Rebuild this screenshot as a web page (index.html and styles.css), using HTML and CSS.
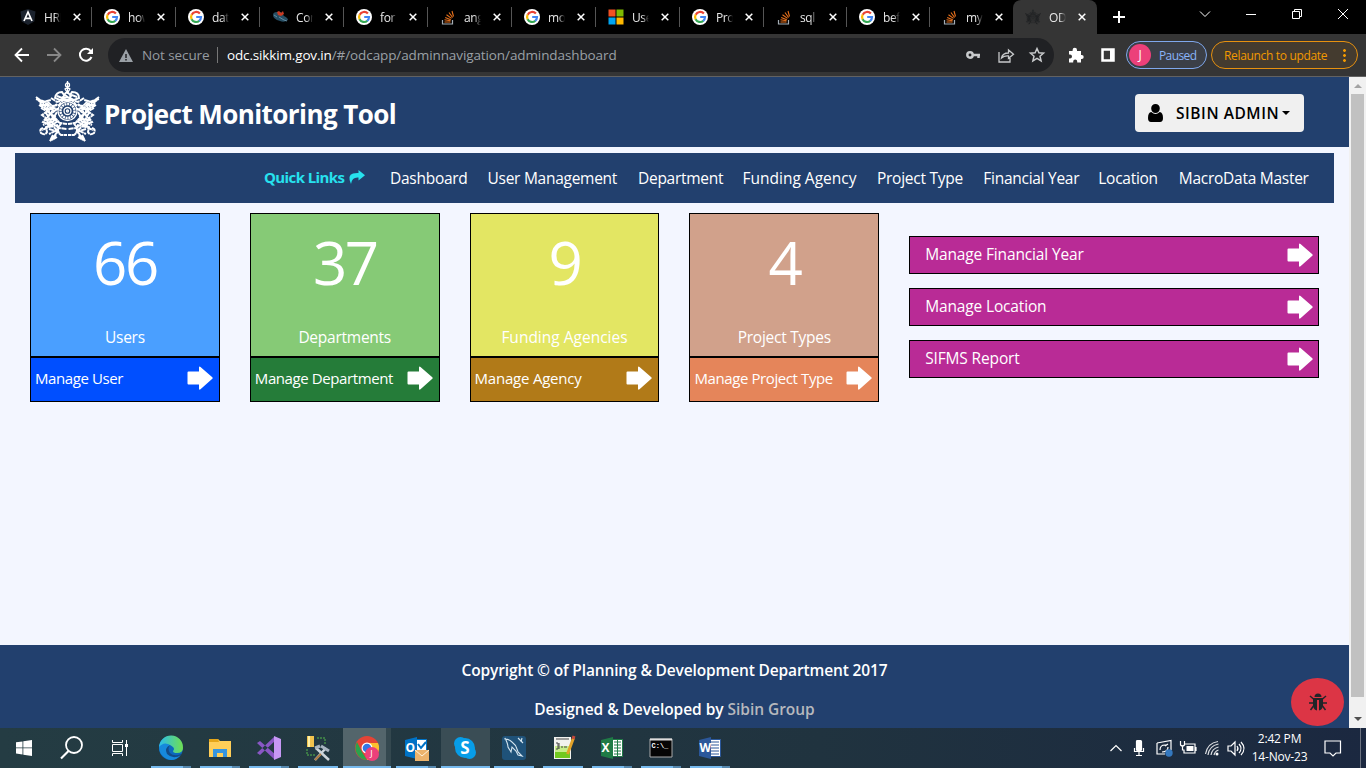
FILE: index.html
```html
<!DOCTYPE html>
<html lang="en">
<head>
<meta charset="utf-8">
<title>Project Monitoring Tool</title>
<link rel="stylesheet" href="styles.css">
</head>
<body>
<svg class="sprite" width="0" height="0">
  <symbol id="google" viewBox="0 0 16 16"><circle cx="8" cy="8" r="8" fill="#fff"/><g fill="none" stroke-width="2.2"><path d="M11.9 4.6A5 5 0 0 0 3.7 5.7" stroke="#ea4335"/><path d="M3.7 5.6a5 5 0 0 0 0 4.8" stroke="#fbbc05"/><path d="M3.6 10.2a5 5 0 0 0 7.8 1.5" stroke="#34a853"/><path d="M8.2 8H13a5 5 0 0 1-1.8 3.8" stroke="#4285f4"/></g></symbol>
  <symbol id="stack" viewBox="0 0 16 16"><path d="M2.500 11v4h10v-4" fill="none" stroke="#a4adb5" stroke-width="1.200"/><path d="M4.500 13h6M4.500 10.800l6 .9M5.200 8.400l5.600 2.300M6.500 5.800l5 3.600M9 3.500l3.600 5M12 2l1.500 5.500" stroke="#e8711c" stroke-width="1.100"/></symbol>
  <symbol id="angular" viewBox="0 0 16 16"><path d="M8 0l7.500 2.6-1.2 10L8 16l-6.300-3.400L.5 2.600z" fill="#1b222d"/><path d="M4 12L8 3l4 9M5.500 9.300h5" fill="none" stroke="#fff" stroke-width="1.700"/></symbol>
  <symbol id="cloud" viewBox="0 0 16 16"><path d="M1 6q0-3 4-3 3-1 5 1 1 2 2 3 4 2 4 4-4 3-8 1Q1 10 1 6z" fill="#264e63"/><path d="M5 3l2-1 2 2 2-2 1 3-3 2-3-1z" fill="#c83a22"/><path d="M7 8l5 3 3 1M2 6l3 2" stroke="#638ba3" fill="none"/></symbol>
  <symbol id="ms" viewBox="0 0 16 16"><path d="M.500.500h7v7h-7z" fill="#f25022"/><path d="M8.500.500h7v7h-7z" fill="#7fba00"/><path d="M.500 8.500h7v7h-7z" fill="#00a4ef"/><path d="M8.500 8.500h7v7h-7z" fill="#ffb900"/></symbol>
  <symbol id="x" viewBox="0 0 8 8"><path d="M.7.7l6.600 6.600M7.300.7L.7 7.300" fill="none" stroke="#fff" stroke-width="1.500"/></symbol>
  <symbol id="emblem" viewBox="0 0 65 62">
    <g fill="none" stroke="currentColor" stroke-width="1.300">
      <circle cx="32.500" cy="4" r="2"/><path d="M32.500 0v12M30 8q2.500-2 5 0l-2.500 4z"/>
      <path d="M20 17q1-6 7-6l2 3q3-5 6 0l2-3q7 0 7 6l-5 2H25zM22 15l5 2 3-3 4 3 3-3 5 2M25 19q7-5 14 0" stroke-width="1.900"/>
      <circle cx="32.500" cy="30" r="9.500"/><circle cx="32.500" cy="30" r="7" stroke-width="2.400" stroke-dasharray="2 .7"/><circle cx="32.500" cy="30" r="3.500"/><circle cx="32.500" cy="30" r="1"/>
    </g>
    <g id="beast" fill="none" stroke="currentColor" stroke-width="2" stroke-dasharray="5 .5">
      <path d="M1 16l15 11M3 19l12 10M5 22l10 10M1 18l10 3 8 10M4 24l10 6M6 27l9 5"/>
      <path d="M16 17l6 4 6-2-4 5-7 1-5-5 4-1M22 23l-8 6-7 5 4 3-3 4 7 3M24 27l-9 6-4 6 9-1-6 8-7 3M22 31l-3 5 4 4-9 6 9-2M11 32l5 8-5 8M8 47q-4 1-2 5 4 3 6-1l-1-5 5-2 6 5-8 4M18 38l7 4 7 1M17 42l7 5 8 1M14 48l7 2 5 4 6 0M22 51l-5 8 5-3M18 54l-3 6 6-6M26 43q-5 4-2 9M16 26l6 2-7 5 6 3M9 38l5 3-6 3M19 25l-3 8 4 5M13 30l5 6-4 7"/>
    </g>
    <use href="#beast" transform="translate(65 0) scale(-1 1)"/>
  </symbol>
  <symbol id="arrow" viewBox="0 0 26 24"><path d="M1.500 5.500H12V1.300q.3-1.300 1.500-.3l11.800 10.200q.8.8 0 1.600L13.500 23.300q-1.200.9-1.500-.3v-4.500H1.500q-1 0-1-1v-11q0-1 1-1z" fill="#fff"/></symbol>
  <symbol id="office" viewBox="0 0 24 24"><path d="M10 3.500h12.500v17H10z" fill="#fff" stroke="currentColor"/><path d="M1 4l12-3v22L1 20z" fill="currentColor"/></symbol>
</svg>

<div class="screen">
  <div class="tabs">
    <div class="tab"><svg class="fav"><use href="#angular"/></svg><span class="title">HRI</span><svg class="close"><use href="#x"/></svg></div>
    <div class="tab"><svg class="fav"><use href="#google"/></svg><span class="title">how</span><svg class="close"><use href="#x"/></svg></div>
    <div class="tab"><svg class="fav"><use href="#google"/></svg><span class="title">dat</span><svg class="close"><use href="#x"/></svg></div>
    <div class="tab"><svg class="fav"><use href="#cloud"/></svg><span class="title">Cor</span><svg class="close"><use href="#x"/></svg></div>
    <div class="tab"><svg class="fav"><use href="#google"/></svg><span class="title">for</span><svg class="close"><use href="#x"/></svg></div>
    <div class="tab"><svg class="fav"><use href="#stack"/></svg><span class="title">ang</span><svg class="close"><use href="#x"/></svg></div>
    <div class="tab"><svg class="fav"><use href="#google"/></svg><span class="title">mo</span><svg class="close"><use href="#x"/></svg></div>
    <div class="tab"><svg class="fav"><use href="#ms"/></svg><span class="title">Use</span><svg class="close"><use href="#x"/></svg></div>
    <div class="tab"><svg class="fav"><use href="#google"/></svg><span class="title">Pro</span><svg class="close"><use href="#x"/></svg></div>
    <div class="tab slim"><svg class="fav"><use href="#stack"/></svg><span class="title">sql</span><svg class="close"><use href="#x"/></svg></div>
    <div class="tab slim"><svg class="fav"><use href="#google"/></svg><span class="title">bef</span><svg class="close"><use href="#x"/></svg></div>
    <div class="tab slim last"><svg class="fav"><use href="#stack"/></svg><span class="title">my</span><svg class="close"><use href="#x"/></svg></div>
    <div class="tab active"><svg class="fav dark"><use href="#emblem"/></svg><span class="title">OD</span><svg class="close"><use href="#x"/></svg></div>
    <svg class="plus" viewBox="0 0 12 12"><path d="M6 0v12M0 6h12" stroke="#fff" stroke-width="2"/></svg>
    <svg class="winctl" viewBox="0 0 148 14" fill="none" stroke="#fff"><path d="M1 4.500l5 5 5-5M47 7.500h10M93.500 4.500h7v7h-7zM95.500 4.500v-2h7v7h-2M139 2l10 10M149 2l-10 10"/></svg>
  </div>

  <div class="toolbar">
    <svg class="navicons" viewBox="0 0 80 16" fill="none" stroke-width="1.800"><path d="M15 8H2M8 1.500L1.500 8 8 14.500" stroke="#fff"/><path d="M33 8h13M40 1.500L46.500 8 40 14.500" stroke="#888"/><path d="M76.800 4.200A6 6 0 1 0 77.500 10" stroke="#fff" stroke-width="2"/><path d="M79 1v6h-6z" fill="#fff"/></svg>
    <div class="omnibox">
      <svg class="warn" viewBox="0 0 14 13"><path d="M7 0l7 13H0z" fill="#9aa0a6"/><path d="M7 5v4M7 10v1.500" stroke="#202124" stroke-width="1.500"/></svg>
      <span class="insecure">Not secure</span><i class="bar"></i>
      <span class="url"><b>odc.sikkim.gov.in</b><span class="path">/#/odcapp/adminnavigation/admindashboard</span></span>
      <svg class="omniicons" viewBox="0 0 78 16"><g fill="none" stroke="#c7c9cb" stroke-width="1.300"><circle cx="4" cy="8" r="2.700" stroke-width="2.500"/><path d="M7 8h7M12.500 8v3" stroke-width="2.500"/><path d="M33 5v10h11v-4M35.500 11q1-5 7-5V3l5 4.300-5 4V9q-4-.5-7 2z"/><path d="M71 1.500l1.900 4.300 4.600.4-3.500 3 1.100 4.600-4.100-2.500-4.100 2.500L68 9.200l-3.500-3 4.600-.4z" stroke-width="1.500"/></g></svg>
    </div>
    <svg class="exticons" viewBox="0 0 48 16"><path d="M1 4h3.600V3a2.200 2.200 0 0 1 4.400 0v1h4v4h.7a2 2 0 0 1 0 4H13v3.500H9.200v-1a2 2 0 0 0-4 0v1H1v-4h1a2 2 0 0 0 0-4H1z" fill="#fff"/><path d="M34.500 2.500h11v11h-11z" fill="none" stroke="#fff" stroke-width="2.500"/><path d="M42 2v12h4V2z" fill="#fff"/></svg>
    <div class="profile"><span class="avatar">J</span><span class="paused">Paused</span></div>
    <div class="relaunch"><span>Relaunch to update</span><i></i></div>
  </div>

  <div class="view">
    <div class="page">
      <header class="head">
        <svg class="crest"><use href="#emblem"/></svg>
        <h1>Project Monitoring Tool</h1>
        <button class="user"><svg viewBox="0 0 15 18"><path d="M7.500 0a4.300 4.300 0 0 1 4.300 4.600Q11.500 9 7.500 9T3.200 4.600A4.300 4.300 0 0 1 7.500 0zM3.300 8q4.200 4 8.400 0Q15 8.500 15 14q0 4-3 4H3q-3 0-3-4 0-5.500 3.300-6z"/></svg><span>SIBIN ADMIN</span><i></i></button>
      </header>
      <nav class="links">
        <strong>Quick Links</strong>
        <svg class="share" viewBox="0 0 16 14"><path d="M9.500 0L16 5.300 9.500 10.500V7.600Q3 7 2 14-2 5 4 3.400q2-.6 5.500-.5z" fill="#27e2ee"/></svg>
        <a class="w1">Dashboard</a><a class="w2">User Management</a><a class="w3">Department</a><a class="w4">Funding Agency</a><a class="w5">Project Type</a><a class="w6">Financial Year</a><a class="w7">Location</a><a class="w8">MacroData Master</a>
      </nav>
      <main class="board">
        <section class="card blue"><div class="top"><b>66</b><span>Users</span></div><div class="foot"><span>Manage User</span><svg><use href="#arrow"/></svg></div></section>
        <section class="card green"><div class="top"><b>37</b><span>Departments</span></div><div class="foot"><span>Manage Department</span><svg><use href="#arrow"/></svg></div></section>
        <section class="card yellow"><div class="top"><b>9</b><span>Funding Agencies</span></div><div class="foot"><span>Manage Agency</span><svg><use href="#arrow"/></svg></div></section>
        <section class="card salmon"><div class="top"><b>4</b><span>Project Types</span></div><div class="foot"><span>Manage Project Type</span><svg><use href="#arrow"/></svg></div></section>
        <section class="actions"><div><span>Manage Financial Year</span><svg><use href="#arrow"/></svg></div><div><span>Manage Location</span><svg><use href="#arrow"/></svg></div><div><span>SIFMS Report</span><svg><use href="#arrow"/></svg></div></section>
      </main>
      <footer class="footer">
        <p class="copy">Copyright © of Planning &amp; Development Department 2017</p>
        <p class="dev">Designed &amp; Developed by <span>Sibin Group</span></p>
      </footer>
      <div class="bug"><svg viewBox="0 0 18 18"><path d="M5.500 4a3.500 3.500 0 0 1 7 0zM4 5h10v8q-1 4-4 4.500V7H8v10.500Q5 17 4 13z" fill="#212529"/><path d="M1 3l3.500 3M17 3l-3.500 3M0 10h5M18 10h-5M1.500 17l3-4M16.500 17l-3-4" stroke="#212529" stroke-width="1.500"/></svg></div>
    </div>
    <div class="scroll"><i class="up"></i><b></b><i class="down"></i></div>
  </div>

  <div class="taskbar">
    <div class="sys"><svg width="16" height="16" viewBox="0 0 16 16"><path d="M0 2.300L6.500 1.400v6.100H0zM7.300 1.300L16 0v7.500H7.300zM0 8.300h6.500v6.200L0 13.600zM7.300 8.300H16V16l-8.700-1.300z" fill="#fff"/></svg></div>
    <div class="sys"><svg width="24" height="24" viewBox="0 0 24 24"><circle cx="14" cy="9" r="8" fill="none" stroke="#fff" stroke-width="1.800"/><path d="M8.500 15L1 22.500" stroke="#fff" stroke-width="2.200"/></svg></div>
    <div class="sys"><svg width="16" height="16" viewBox="0 0 16 16" fill="none" stroke="#fff"><path d="M.5 0v2.500h10V0M.5 16v-2.500h10V16M.5 4.500h10v7H.5zM14.500 0v16"/><path d="M13 4h3v3h-3z" fill="#fff" stroke="none"/></svg></div>
    <div class="apps">
      <div class="app two"><svg viewBox="0 0 24 24"><defs><linearGradient id="eg"><stop stop-color="#2abced"/><stop offset="1" stop-color="#70df50"/></linearGradient></defs><circle cx="12" cy="12" r="12" fill="#0c69bd"/><path d="M0 11A12 12 0 0 1 24 12q0 5-6 5-4 0-4-2 2-2 0-4Q10 6 0 11z" fill="url(#eg)"/><path d="M0 11q5-6 11-2-4 3-2 8 4 5 12 3-6 6-13 3-8-4-8-12z" fill="#1689dc"/><path d="M11 9q-3 4 0 8 4 4 11 1 1 0 0 1Q14 24 8 18q-3-6 3-9z" fill="#124b88"/></svg></div>
      <div class="app two"><svg viewBox="0 0 24 24"><path d="M1 3h9l2 2h11v16H1z" fill="#ffce58"/><path d="M1 3h9l1 3H1z" fill="#e5a619"/><path d="M5 21v-8h14v8h-4v-4H9v4z" fill="#3695df"/></svg></div>
      <div class="app two"><svg viewBox="0 0 24 24"><path d="M0 7l3-2 16 14-2 4zM0 17l3 2L19 4l-2-3z" fill="#8957c5"/><path d="M17 0l7 3v18l-7 3z" fill="#c798f5"/></svg></div>
      <div class="app"><svg viewBox="0 0 24 24"><path d="M1 0h7v11H1z" fill="#f2c34e"/><path d="M2 0h2v11H2z" fill="#fff1a8"/><path d="M11 2h8v7M1 13v6h8" fill="none" stroke="#55b94b" stroke-dasharray="2 1"/><path d="M10 12l13 12M20 12L9 24" stroke="#cdd6dc" stroke-width="2.500"/><path d="M15 10l8 5M9 12l5-2" stroke="#a8b4c0" stroke-width="3"/><path d="M9 24l6-6" stroke="#a9773e" stroke-width="2"/></svg></div>
      <div class="app current"><svg viewBox="0 0 24 24"><circle cx="12" cy="12" r="12" fill="#e44436"/><path d="M2 6l5 10 5 8A12 12 0 0 1 2 6z" fill="#2ba24c"/><path d="M12 7h11a12 12 0 0 1-11 17l5-9z" fill="#fbc02d"/><circle cx="12" cy="12" r="5.500" fill="#fff"/><circle cx="12" cy="12" r="4.300" fill="#3477e5"/></svg><em>J</em></div>
      <div class="app two"><svg viewBox="0 0 24 24" color="#0072c6"><use href="#office"/><path d="M14 8l3 4 5-6" fill="none" stroke="#0072c6" stroke-width="2"/><path d="M11 14h14v11H11z" fill="#ecb36c"/><path d="M11 14l7 6 7-6" fill="none" stroke="#fff3dc"/></svg><span class="letter">O</span></div>
      <div class="app wide"><svg viewBox="0 0 24 24"><circle cx="12" cy="12" r="10" fill="#079de8"/><circle cx="7.500" cy="7.500" r="6.500" fill="#079de8"/><circle cx="16.500" cy="16.500" r="6.500" fill="#079de8"/></svg><span class="letter mid">S</span></div>
      <div class="app"><svg viewBox="0 0 24 24"><rect width="24" height="24" rx="3" fill="#1f5279"/><path d="M3 3q4 0 7 3 4 3 5 7l1 3 4 4-4-1-2-4-4-4-1 5-3-5q0-3-3-9zM16 2l5 5M20 2l-1 4" fill="none" stroke="#d4e5ef" stroke-width="1.100"/></svg></div>
      <div class="app"><svg viewBox="0 0 24 24"><path d="M3 1h17v22H3z" fill="#f2f2ee"/><path d="M4 13h15v9H4z" fill="#72c91f"/><path d="M4 10h15v6H4z" fill="#c7ee8a"/><path d="M5 7h2v6H5M8 7v6M10 11h2m1 0h3M5 3h13" fill="none" stroke="#444"/><path d="M22.500 2l-6 16" stroke="#e3a329" stroke-width="3"/><path d="M23 0l-1 3" stroke="#c34a3b" stroke-width="3"/></svg></div>
      <div class="app two"><svg viewBox="0 0 24 24" color="#1f7b46"><use href="#office"/><path d="M14 6h7M14 9h7M14 12h7M14 15h7M14 18h7M17.500 4v16" stroke="#1f7b46"/></svg><span class="letter">X</span></div>
      <div class="app two"><svg viewBox="0 0 24 24"><path d="M1 3h22v18H1z" fill="#050505" stroke="#aaa"/><path d="M1 3.500h22" stroke="#ddd" stroke-width="2"/></svg><span class="cmd">C:\_</span></div>
      <div class="app two"><svg viewBox="0 0 24 24" color="#2b579a"><use href="#office"/><path d="M13 6h8M13 9h8M13 12h8M13 15h8M13 18h8" stroke="#2b579a"/></svg><span class="letter">W</span></div>
    </div>
    <svg class="tray" viewBox="0 0 136 20" fill="none" stroke="#fff" stroke-width="1.200"><path d="M.5 13L6 7.500 11.500 13"/><rect x="26.500" y="2.500" width="5" height="10" rx="1" fill="#fff"/><path d="M24.500 10v3.500h9V10M29 13v4M26 17.500h6"/><path d="M47 5l14-2.500V12M47 5v11h8M50 12q0-5 5-5h2M55 8l3-2M58 9q0 5-6 5"/><circle cx="59" cy="15" r="3.700" fill="#3478bf" stroke="none"/><path d="M75 6h10v9H74v-3M86 9v4M70.500 3v4q2 2 4 0V3M72.500 8v4h2"/><path d="M76.500 8h7v5h-7z" fill="#fff" stroke="none"/><path d="M98 17q1-9 10.500-11M101 17q1-6.500 7.500-8M104 17q1-4 4.500-5M95.500 16Q97.500 5 108 3.500" opacity=".85"/><circle cx="107" cy="16" r="1.500" fill="#fff" stroke="none"/><path d="M118 8h3l4-4v13l-4-4h-3zM127 8q2 2.500 0 5M129 6q4 4.500 0 9M131 4q6 6.500 0 13"/></svg>
    <div class="clock"><span>2:42 PM</span><span>14-Nov-23</span></div>
    <svg class="notice" viewBox="0 0 18 18"><path d="M1 2h15.500v12H12l-3 3-3-3H1z" fill="none" stroke="#fff" stroke-width="1.200"/></svg>
    <i class="peek"></i>
  </div>
</div>
</body>
</html>
```
FILE: styles.css
```css
* { box-sizing: border-box; }
body { margin: 0; overflow: hidden; font-family: "Segoe UI", "Open Sans", "Noto Sans", sans-serif; }
.sprite { position: absolute; }
svg { display: block; flex: none; overflow: visible; }
span, a, strong, h1 { white-space: nowrap; }
.screen { width: 1366px; height: 768px; display: flex; flex-direction: column; }

.tabs { height: 34px; background: #000; display: flex; align-items: center; padding-left: 8px; flex: none; }
.tab { width: 84px; height: 34px; flex: none; display: flex; align-items: center; padding-left: 12px; background: linear-gradient(#555, #555) right 7px / 1px 20px no-repeat; }
.tab.slim { width: 83px; }
.tab.last { background: none; }
.tab.active { background: #353535; border-radius: 8px 8px 0 0; }
.fav { width: 16px; height: 16px; }
.dark { color: #1e2122; }
.title { color: #e8e8e8; font-size: 12px; letter-spacing: -.4px; width: 17px; margin: 0 12px 0 8px; mask-image: linear-gradient(90deg, #000 60%, transparent); }
.close { width: 8px; height: 8px; }
.plus { width: 12px; height: 12px; margin-left: 16px; }
.winctl { width: 148px; height: 14px; margin: -6px 19px 0 auto; }

.toolbar { height: 43px; flex: none; background: #353535; border-bottom: 1px solid #626262; display: flex; align-items: center; padding-left: 14px; }
.navicons { width: 80px; height: 16px; margin-right: 14px; }
.omnibox { width: 946px; height: 34px; border-radius: 17px; background: #202124; display: flex; align-items: center; padding: 0 11px; }
.warn { width: 14px; height: 13px; }
.insecure { margin-left: 9px; color: #969ba0; font-size: 13.500px; width: 67px; letter-spacing: -.1px; }
.bar { width: 1px; height: 16px; background: #777; margin: 0 9px 0 8px; }
.url { font-size: 13.500px; color: #9aa0a6; letter-spacing: -.1px; }
.url b { color: #fff; font-weight: 400; letter-spacing: -.15px; }
.omniicons { width: 78px; height: 16px; margin-left: auto; margin-right: -1px; }
.exticons { width: 48px; height: 16px; margin-left: 14px; }
.profile { width: 81px; height: 28px; margin-left: 10px; border: 1px solid #7fa8ed; border-radius: 14px; display: flex; align-items: center; padding-left: 2px; background: #3b3f47; color: #8ab4f8; font-size: 12px; }
.avatar { width: 22px; height: 22px; background: #ec407a; color: #fff; border-radius: 50%; text-align: center; line-height: 22px; margin-right: 8px; }
.paused { letter-spacing: -.6px; }
.relaunch { width: 147px; height: 28px; margin-left: 4px; border: 1px solid #e7910f; border-radius: 14px; display: flex; align-items: center; padding-left: 12px; background: #443b2f; color: #f29900; font-size: 12px; }
.relaunch span { width: 103px; letter-spacing: -.33px; }
.relaunch i { width: 3px; height: 14px; margin-left: 16px; background: radial-gradient(circle, #f29900 1.300px, transparent 1.500px) 0 0 / 3px 5px; }

.view { display: flex; height: 651px; flex: none; }
.page { width: 1349px; height: 651px; background: #f3f6ff; display: flex; flex-direction: column; position: relative; }
.head { height: 70px; background: #22406e; display: flex; align-items: center; padding: 0 45px 0 35px; }
.crest { width: 65px; height: 62px; color: #fff; }
.head h1 { margin: 4px 0 0 4px; color: #fff; font-size: 26px; font-weight: 700; letter-spacing: -.58px; }
.user { margin: 2px 0 0 auto; width: 169px; height: 38px; border: 0; border-radius: 4px; background: #f0f0f0; display: flex; align-items: center; padding: 0 0 0 13px; font: 600 15.500px "Segoe UI", "Open Sans", sans-serif; color: #000; }
.user svg { width: 15px; height: 18px; }
.user span { margin-left: 13px; width: 104px; text-align: left; letter-spacing: .55px; }
.user i { border: 4px solid transparent; border-top-color: #000; border-bottom: 0; margin-left: 2px; }
.links { height: 50px; margin: 6px 15px 0; background: #22406e; display: flex; align-items: center; padding-left: 249px; color: #fff; font-size: 15.500px; }
.links strong { color: #27e2ee; font-size: 15px; font-weight: 700; width: 81px; margin-top: -3px; letter-spacing: -.6px; }
.share { width: 16px; height: 14px; margin: -2px 25px 0 4px; }
.links a { letter-spacing: -.27px; margin: -1px 20px 0 0; }
.w1 { width: 77.500px; } .w2 { width: 130.500px; } .w3 { width: 84.500px; } .w4 { width: 114.500px; } .w5 { width: 86.300px; } .w6 { width: 95px; } .w7 { width: 60.500px; } .w8 { width: 131px; }
.links .w4 { letter-spacing: 0; }
.board { display: flex; gap: 30px; padding: 10px 30px 0; height: 442px; align-items: flex-start; }
.card { width: 189.800px; color: #fff; font-size: 15.500px; flex: none; }
.top { height: 144px; border: 1px solid #000; display: flex; flex-direction: column; align-items: center; }
.top b { font-weight: 400; font-size: 60px; line-height: 82px; margin-top: 7px; letter-spacing: -2.500px; }
.top span { line-height: 24px; margin-top: 21.500px; letter-spacing: -.25px; }
.yellow .top span { letter-spacing: 0; }
.foot { height: 45px; border: 1px solid #000; display: flex; align-items: center; justify-content: space-between; padding: 0 6px 3px 4px; }
.foot span { letter-spacing: -.4px; font-size: 15px; }
.yellow .foot span { letter-spacing: -.22px; }
.foot svg, .actions svg { width: 26px; height: 24px; }
.blue .top { background: #4a9fff; } .blue .foot { background: #004fff; }
.green .top { background: #86ca76; } .green .foot { background: #257c39; }
.yellow .top { background: #e3e663; } .yellow .foot { background: #b17a18; }
.salmon .top { background: #d1a18b; } .salmon .foot { background: #e5855a; }
.actions { flex: 1; display: flex; flex-direction: column; gap: 14px; padding-top: 23px; }
.actions div { height: 38px; border: 1px solid #000; background: #b92b96; color: #fff; display: flex; align-items: center; justify-content: space-between; padding: 0 5px 0 15px; font-size: 15.500px; letter-spacing: -.15px; }
.actions span { margin-top: -2px; }
.footer { height: 83px; background: #22406e; color: #fff; text-align: center; font-weight: 600; font-size: 15.500px; line-height: 24px; padding-top: 13px; }
.footer p { margin: 0 0 15px; letter-spacing: -.14px; }
.footer .dev { letter-spacing: -.04px; }
.footer span { color: #b6b8bd; }
.bug { position: absolute; right: 5px; bottom: 2px; width: 53px; height: 48px; border-radius: 50%; background: #dc3545; display: flex; align-items: center; justify-content: center; }
.bug svg { width: 18px; height: 18px; }
.scroll { width: 17px; background: #f1f1f1; display: flex; flex-direction: column; align-items: center; }
.scroll i { border: 4px solid transparent; }
.scroll .up { border-bottom-color: #a3a3a3; border-top: 0; margin: 7px 0 6px; }
.scroll b { width: 13px; height: 603px; background: #c1c1c1; }
.scroll .down { border-top-color: #505050; border-bottom: 0; margin-top: 20px; }

.taskbar { height: 40px; flex: none; background: linear-gradient(90deg, #243c43, #20333f 60%, #1b2840); display: flex; color: #fff; }
.sys { width: 48px; display: flex; align-items: center; justify-content: center; }
.apps { display: flex; margin-left: 2.500px; }
.app { width: 49px; position: relative; display: flex; align-items: center; justify-content: center; background: linear-gradient(#76b9ed, #76b9ed) center bottom / 40px 2px no-repeat; }
.app > svg { width: 24px; height: 24px; }
.app.two { background: linear-gradient(90deg, #76b9ed 32px, #5688ae 32px) center bottom / 40px 2px no-repeat; }
.app.current { background: linear-gradient(#76b9ed, #76b9ed) left 0 bottom / 100% 2px no-repeat, linear-gradient(90deg, #53656b 43px, #34484f 43px); margin: 0 1px 0 0; width: 48px; }
.app.wide { background: linear-gradient(#76b9ed, #76b9ed) center bottom / 100% 2px no-repeat, #3a4d55; }
.app em { position: absolute; left: 22px; top: 19px; width: 14px; height: 14px; border-radius: 50%; background: #ec407a; font: 9px/14px "Open Sans", sans-serif; text-align: center; }
.letter { position: absolute; left: 14px; top: 12px; font-size: 12px; line-height: 16px; font-weight: 700; }
.letter.mid { left: 0; right: 0; text-align: center; font-size: 17px; }
.cmd { position: absolute; left: 15px; top: 13px; font: 700 7px/10px "Liberation Mono", monospace; }
.tray { width: 136px; height: 20px; margin: 10px 0 0 375.500px; }
.clock { width: 65px; margin-left: 1px; display: flex; flex-direction: column; align-items: center; font-size: 12px; line-height: 18px; padding-top: 2px; letter-spacing: -.2px; }
.notice { width: 18px; height: 18px; margin: 11px 0 0 12px; }
.peek { width: 1px; background: #6b7280; margin-left: 18px; }
```
